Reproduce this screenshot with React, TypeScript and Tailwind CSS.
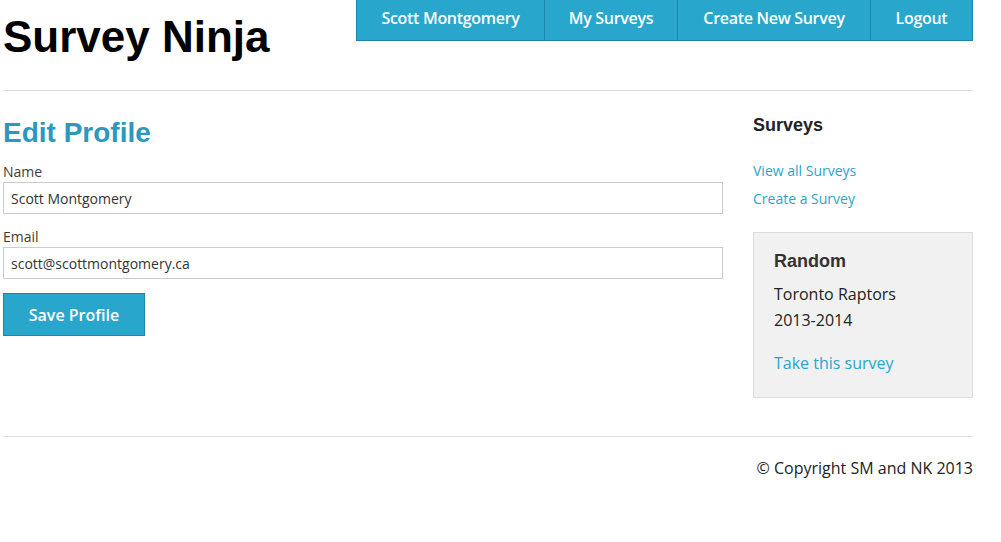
export default function App() {
  const nav = [
    { label: 'Scott Montgomery', w: 'w-[187px]' },
    { label: 'My Surveys', w: 'w-[133px]' },
    { label: 'Create New Survey', w: 'w-[193px]' },
    { label: 'Logout', w: 'w-[102px]' },
  ]

  return (
    <div className="min-h-screen bg-white text-[#333] font-['Open_Sans',sans-serif]">
      <div className="w-[970px] ml-[3px]">
        {/* Header */}
        <div className="flex justify-between items-start h-[91px] border-b border-[#ddd]">
          <h1 className="mt-[10px] text-[44px] leading-[54px] font-bold text-black font-['Liberation_Sans',Arial,sans-serif]">
            Survey Ninja
          </h1>
          <nav className="flex h-[41px] bg-[#29a6cb] border border-[#1e86a8] border-t-0">
            {nav.map((n, i) => (
              <a
                key={n.label}
                href="#"
                className={`${n.w} flex items-center justify-center pb-[4px] text-[16px] font-semibold text-white tracking-[-0.3px] ${i > 0 ? 'border-l border-[#1e86a8]' : ''}`}
              >
                {n.label}
              </a>
            ))}
          </nav>
        </div>

        {/* Main */}
        <div className="flex gap-[30px] h-[346px] border-b border-[#ddd]">
          <div className="w-[720px]">
            <h2 className="mt-[25px] text-[28px] leading-[34px] font-bold text-[#2b98c0] font-['Liberation_Sans',Arial,sans-serif]">
              Edit Profile
            </h2>
            <label className="block mt-[12px] text-[14px] leading-[20px] text-[#4a3a30]">Name</label>
            <input
              className="block w-full h-[32px] border border-[#ccc] px-[7px] text-[14px] text-[#333] outline-none"
              defaultValue="Scott Montgomery"
            />
            <label className="block mt-[13px] text-[14px] leading-[20px] text-[#4a3a30]">Email</label>
            <input
              className="block w-full h-[32px] border border-[#ccc] px-[7px] text-[14px] text-[#333] outline-none"
              defaultValue="scott@scottmontgomery.ca"
            />
            <button className="mt-[14px] w-[142px] h-[43px] bg-[#29a6cb] border border-[#1e86a8] text-white text-[16px] font-semibold">
              Save Profile
            </button>
          </div>

          <div className="w-[220px]">
            <h3 className="mt-[23px] text-[18px] leading-[22px] font-bold text-[#222] font-['Liberation_Sans',Arial,sans-serif]">
              Surveys
            </h3>
            <div className="mt-[25px] flex flex-col gap-[8px] text-[14px] leading-[20px] text-[#29a6cb]">
              <a href="#">View all Surveys</a>
              <a href="#">Create a Survey</a>
            </div>
            <div className="mt-[23px] h-[166px] bg-[#f1f1f1] border border-[#ddd] px-[20px] pt-[17px]">
              <h4 className="text-[18px] leading-[22px] font-bold text-[#333] font-['Liberation_Sans',Arial,sans-serif]">
                Random
              </h4>
              <p className="mt-[9px] text-[16px] leading-[26px] text-[#222]">
                Toronto Raptors
                <br />
                2013-2014
              </p>
              <a href="#" className="block mt-[19px] text-[16px] leading-[22px] text-[#29a6cb]">
                Take this survey
              </a>
            </div>
          </div>
        </div>

        {/* Footer */}
        <div className="flex justify-end pt-[20px] text-[16px] leading-[22px] text-[#222]">
          © Copyright SM and NK 2013
        </div>
      </div>
    </div>
  )
}
